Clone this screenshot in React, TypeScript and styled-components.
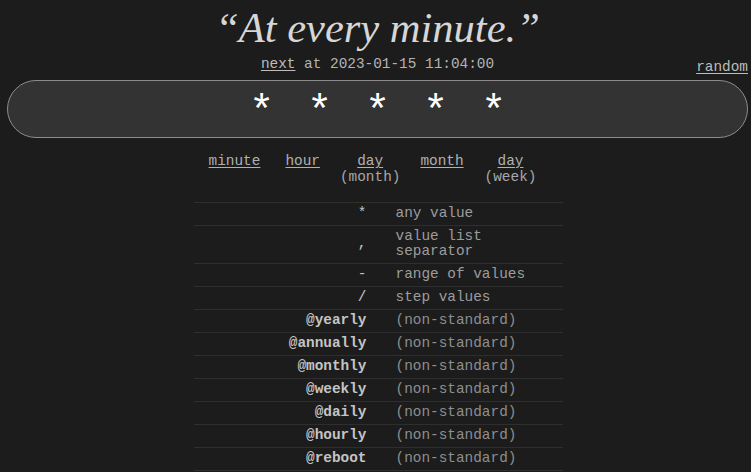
import React from "react";
import styled, { createGlobalStyle } from "styled-components";

const Global = createGlobalStyle`
  html, body { margin: 0; padding: 0; background: #1c1c1c; }
  body {
    font-family: "Liberation Mono", "Courier New", monospace;
    font-size: 14.4px;
    color: #b8b8b8;
  }
`;

const Page = styled.div`
  padding: 0 3px 0 7px;
  display: flex;
  flex-direction: column;
`;

const Title = styled.h1`
  margin: 0;
  padding-top: 4px;
  height: 47px;
  text-align: center;
  font-family: "Liberation Serif", "Times New Roman", serif;
  font-style: italic;
  font-weight: normal;
  font-size: 42.5px;
  line-height: 48px;
  color: #d6d6d6;
`;

const NextRow = styled.div`
  display: grid;
  grid-template-columns: 1fr auto 1fr;
  align-items: end;
  height: 25px;
  padding-bottom: 4px;
`;

const NextText = styled.div`
  grid-column: 2;
  color: #b4b4b4;
  line-height: 16px;
  padding-bottom: 4px;
`;

const RandomSlot = styled.div`
  grid-column: 3;
  text-align: right;
  line-height: 16px;
  padding-bottom: 1px;
`;

const Link = styled.a`
  color: #bdbdbd;
  text-decoration: underline;
  text-underline-offset: 2px;
`;

const Editor = styled.div`
  box-sizing: border-box;
  height: 58px;
  border: 1.5px solid #8c8c8c;
  border-radius: 30px;
  background: #333333;
  display: flex;
  justify-content: center;
  align-items: flex-start;
  padding-top: 12px;
  padding-left: 4px;
  font-size: 42px;
  line-height: 40px;
  letter-spacing: 3.8px;
  color: #ffffff;
  white-space: pre;
`;

const Fields = styled.div`
  display: flex;
  justify-content: center;
  padding: 15px 10px 0 0;
  height: 48.5px;
`;

const Field = styled.div<{ $gap: number }>`
  display: flex;
  flex-direction: column;
  align-items: center;
  line-height: 16px;
  color: #a8a8a8;
  margin-right: ${(p) => p.$gap}px;
`;

const FieldLink = styled.a`
  color: #b0b0b0;
  text-decoration: underline;
  text-underline-offset: 2px;
`;

const Help = styled.div`
  align-self: center;
  width: 369px;
  margin-left: 1px;
  border-top: 1px solid #2e2e2e;
  display: grid;
  grid-template-columns: 177px 192px;
`;

const Sym = styled.div<{ $bold?: boolean }>`
  text-align: right;
  padding: 3px 4px 3.5px 0;
  line-height: 15.5px;
  border-bottom: 1px solid #2e2e2e;
  color: #c4c4c4;
  font-weight: ${(p) => (p.$bold ? "bold" : "normal")};
  display: flex;
  justify-content: flex-end;
  align-items: center;
`;

const Desc = styled.div<{ $dim?: boolean }>`
  padding: 3px 0 3.5px 25px;
  line-height: 15.5px;
  border-bottom: 1px solid #2e2e2e;
  color: ${(p) => (p.$dim ? "#8e8e8e" : "#9c9c9c")};
`;

const rows: [string, string, boolean][] = [
  ["*", "any value", false],
  [",", "value list separator", false],
  ["-", "range of values", false],
  ["/", "step values", false],
  ["@yearly", "(non-standard)", true],
  ["@annually", "(non-standard)", true],
  ["@monthly", "(non-standard)", true],
  ["@weekly", "(non-standard)", true],
  ["@daily", "(non-standard)", true],
  ["@hourly", "(non-standard)", true],
  ["@reboot", "(non-standard)", true],
];

export default function App() {
  return (
    <Page>
      <Global />
      <Title>“At every minute.”</Title>
      <NextRow>
        <NextText>
          <Link href="#">next</Link> at 2023-01-15 11:04:00
        </NextText>
        <RandomSlot>
          <Link href="#">random</Link>
        </RandomSlot>
      </NextRow>
      <Editor>* * * * *</Editor>
      <Fields>
        <Field $gap={25}><FieldLink href="#">minute</FieldLink></Field>
        <Field $gap={20}><FieldLink href="#">hour</FieldLink></Field>
        <Field $gap={20}><FieldLink href="#">day</FieldLink>(month)</Field>
        <Field $gap={21}><FieldLink href="#">month</FieldLink></Field>
        <Field $gap={0}><FieldLink href="#">day</FieldLink>(week)</Field>
      </Fields>
      <Help>
        {rows.map(([s, d, b]) => (
          <React.Fragment key={s}>
            <Sym $bold={b}>{s}</Sym>
            <Desc $dim={b}>{d}</Desc>
          </React.Fragment>
        ))}
      </Help>
    </Page>
  );
}
